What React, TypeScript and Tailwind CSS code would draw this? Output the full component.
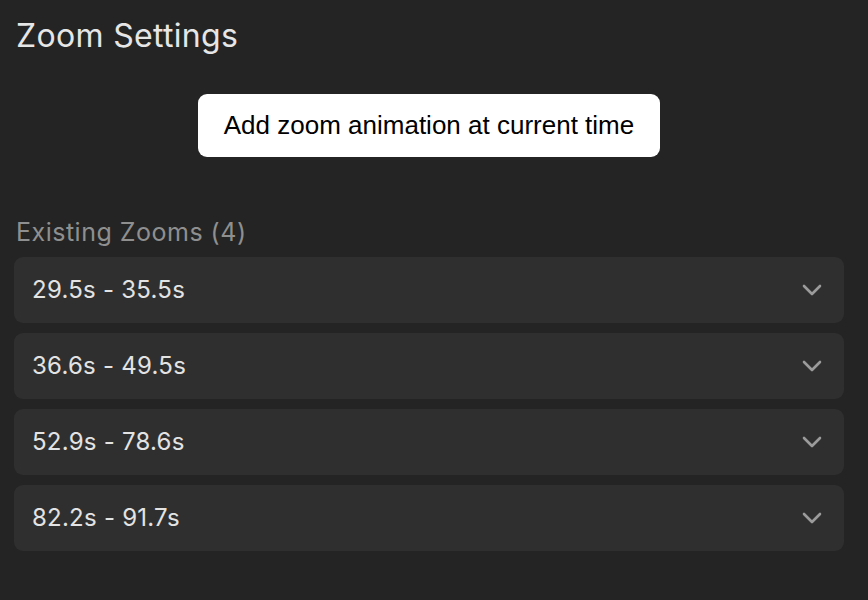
import React from 'react';

const zooms = [
  { start: 29.5, end: 35.5 },
  { start: 36.6, end: 49.5 },
  { start: 52.9, end: 78.6 },
  { start: 82.2, end: 91.7 },
];

const Chevron = () => (
  <svg width="22" height="14" viewBox="0 0 22 14" fill="none" className="text-[#9b9b9b]">
    <path d="M3 3 L11 11 L19 3" stroke="currentColor" strokeWidth="2.6" strokeLinecap="round" strokeLinejoin="round" />
  </svg>
);

export default function App() {
  return (
    <div className="w-full h-[600px] bg-[#242424] pl-[14px] pr-[24px] pt-[14px] font-['Inter',sans-serif]">
      <h1 className="text-[32px] leading-[44px] pl-[2px] text-[#e6e6e6] font-normal tracking-[0.01em]">Zoom Settings</h1>

      <div className="flex justify-center mt-[36px]">
        <button className="h-[63px] px-[26px] bg-white rounded-[9px] text-black text-[26px] font-['Liberation_Sans',Arial,sans-serif]">
          Add zoom animation at current time
        </button>
      </div>

      <div className="mt-[60px] pl-[2px] text-[25px] leading-[30px] text-[#8f8f8f] tracking-[0.02em]">
        Existing Zooms ({zooms.length})
      </div>

      <div className="mt-[10px] flex flex-col gap-[10px]">
        {zooms.map((z, i) => (
          <div key={i} className="h-[66px] rounded-[9px] bg-[#2f2f2f] flex items-center justify-between pl-[18px] pr-[21px]">
            <span className="text-[24px] text-[#e3e3e3] tracking-[0.01em]">
              {z.start.toFixed(1)}s - {z.end.toFixed(1)}s
            </span>
            <Chevron />
          </div>
        ))}
      </div>
    </div>
  );
}
